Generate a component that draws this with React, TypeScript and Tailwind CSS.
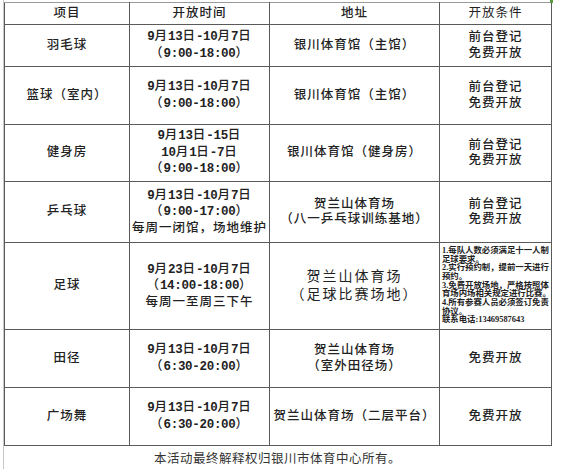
import React from 'react'

const font = {
  fontFamily: '"Liberation Serif", "Noto Sans CJK SC", serif',
}

type Row = {
  name: string
  time: string[]
  place: string[]
  cond: string[]
  h: string
}

const rows: Row[] = [
  { name: '羽毛球', time: ['9月13日-10月7日', '（9:00-18:00）'], place: ['银川体育馆（主馆）'], cond: ['前台登记', '免费开放'], h: 'h-[42px]' },
  { name: '篮球（室内）', time: ['9月13日-10月7日', '（9:00-18:00）'], place: ['银川体育馆（主馆）'], cond: ['前台登记', '免费开放'], h: 'h-[58px]' },
  { name: '健身房', time: ['9月13日-15日', '10月1日-7日', '（9:00-18:00）'], place: ['银川体育馆（健身房）'], cond: ['前台登记', '免费开放'], h: 'h-[57px]' },
  { name: '乒乓球', time: ['9月13日-10月7日', '（9:00-17:00）', '每周一闭馆，场地维护'], place: ['贺兰山体育场', '（八一乒乓球训练基地）'], cond: ['前台登记', '免费开放'], h: 'h-[61px]' },
]

const rowsAfter: Row[] = [
  { name: '田径', time: ['9月13日-10月7日', '（6:30-20:00）'], place: ['贺兰山体育场', '（室外田径场）'], cond: ['免费开放'], h: 'h-[58px]' },
  { name: '广场舞', time: ['9月13日-10月7日', '（6:30-20:00）'], place: ['贺兰山体育场（二层平台）'], cond: ['免费开放'], h: 'h-[58px]' },
]

const football = [
  '1.每队人数必须满足十一人制',
  '足球要求。',
  '2.实行预约制，提前一天进行',
  '预约。',
  '3.免费开放场地，严格按照体',
  '育场内场相关规定进行比赛。',
  '4.所有参赛人员必须签订免责',
  '协议。',
  '联系电话:13469587643',
]

const td = 'border border-[#5a5a5a] p-0 text-center align-middle'

// half-width runs get the monospace face, like the original's SimSun digits
function Mixed({ text }: { text: string }) {
  const parts = text.split(/([\x20-\x7e]+)/).filter(Boolean)
  return (
    <>
      {parts.map((p, i) =>
        /^[\x20-\x7e]+$/.test(p) ? (
          <span key={i} className="font-bold tracking-[-0.3px]" style={{ fontFamily: '"Liberation Mono", monospace' }}>
            {p}
          </span>
        ) : (
          <span key={i}>{p}</span>
        ),
      )}
    </>
  )
}

function Lines({ items }: { items: string[] }) {
  return (
    <>
      {items.map((t) => (
        <div key={t} className="whitespace-nowrap">
          <Mixed text={t} />
        </div>
      ))}
    </>
  )
}

function DataRow({ r }: { r: Row }) {
  return (
    <tr className={r.h}>
      <td className={td}><Lines items={[r.name]} /></td>
      <td className={td}><Lines items={r.time} /></td>
      <td className={td}><Lines items={r.place} /></td>
      <td className={td}><Lines items={r.cond} /></td>
    </tr>
  )
}

export default function App() {
  return (
    <div className="relative h-[469px] w-[563px] overflow-hidden bg-white" style={font}>
      <div className="ml-[3px] h-full border-l border-[#c8c8c8] pt-[2px]">
        <table className="table-fixed border-collapse text-[12.5px] font-medium leading-[15.5px] tracking-[1px] text-[#222]">
          <colgroup>
            <col className="w-[125px]" />
            <col className="w-[140px]" />
            <col className="w-[170px]" />
            <col className="w-[111px]" />
          </colgroup>
          <tbody>
            <tr className="h-[22px]">
              <td className={`${td} border-t-[#9a9a9a]`}>项目</td>
              <td className={`${td} border-t-[#9a9a9a]`}>开放时间</td>
              <td className={`${td} border-t-[#9a9a9a]`}>地址</td>
              <td className={`${td} border-t-[#9a9a9a] font-normal`}>开放条件</td>
            </tr>
            {rows.map((r) => (
              <DataRow key={r.name} r={r} />
            ))}
            <tr className="h-[87px]">
              <td className={td}>足球</td>
              <td className={td}>
                <Lines items={['9月23日-10月7日', '（14:00-18:00）', '每周一至周三下午']} />
              </td>
              <td className={`${td} text-[14px] font-normal leading-[18px] tracking-[2px]`}>
                <Lines items={['贺兰山体育场', '（足球比赛场地）']} />
              </td>
              <td className={`${td} pl-[2px] text-left align-middle text-[8.4px] font-bold leading-[8.7px] tracking-[0px]`}>
                {football.map((t) => (
                  <div key={t} className="whitespace-nowrap">{t}</div>
                ))}
              </td>
            </tr>
            {rowsAfter.map((r) => (
              <DataRow key={r.name} r={r} />
            ))}
          </tbody>
        </table>
        <div className="w-[547px] pt-[6px] text-center text-[12.5px] leading-[14px] tracking-[0.5px] text-[#333]">
          本活动最终解释权归银川市体育中心所有。
        </div>
      </div>
      <div className="absolute right-[10px] top-0 h-[3px] w-[3px] bg-[#5a9a3a]" />
    </div>
  )
}
